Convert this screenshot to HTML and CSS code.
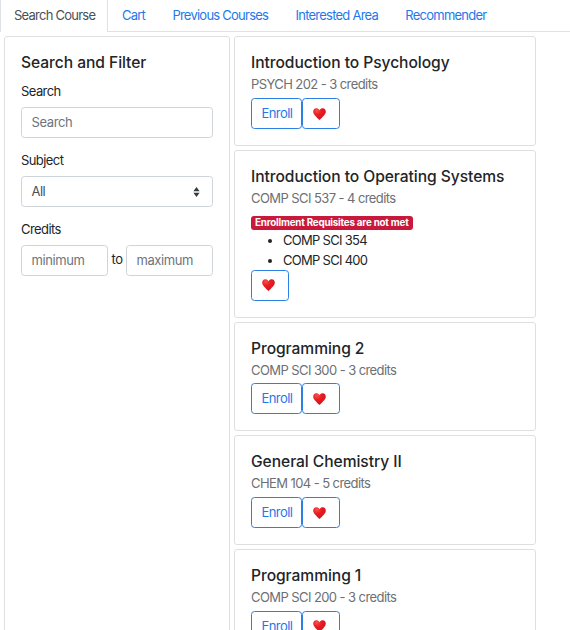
FILE: index.html
```
<!DOCTYPE html>
<html lang="en">
<head>
<meta charset="utf-8">
<title>Search Course</title>
<link rel="stylesheet" href="styles.css">
</head>
<body>
<svg class="defs" width="0" height="0" aria-hidden="true">
  <defs>
    <radialGradient id="red" cx=".3" cy=".2" r=".9"><stop offset="0" stop-color="#f8504a"/><stop offset=".4" stop-color="#e91c22"/><stop offset="1" stop-color="#d4101a"/></radialGradient>
    <symbol id="heart" viewBox="0 0 13 12"><path fill="url(#red)" d="M6.500 2.200C7.300.7 8.500.2 9.800.2 11.600.2 12.800 1.600 12.800 3.500 12.800 6.600 9.400 9.200 6.500 11.900 3.600 9.200.2 6.600.2 3.500.2 1.600 1.400.2 3.200.2 4.500.2 5.700.7 6.500 2.200Z"/></symbol>
  </defs>
</svg>
<nav class="tabs">
  <a class="tab active">Search Course</a>
  <a class="tab">Cart</a>
  <a class="tab">Previous Courses</a>
  <a class="tab">Interested Area</a>
  <a class="tab">Recommender</a>
</nav>
<main class="page">
  <aside class="card filter">
    <h2 class="title">Search and Filter</h2>
    <label class="label">Search</label>
    <div class="field placeholder">Search</div>
    <label class="label">Subject</label>
    <div class="field select"><span>All</span>
      <svg width="7" height="10" viewBox="0 0 7 10"><path fill="#343a40" d="M3.500 0 6.600 4.300H.4ZM3.500 10 .4 5.700H6.600Z"/></svg>
    </div>
    <label class="label">Credits</label>
    <div class="range"><div class="field placeholder small">minimum</div><span>to</span><div class="field placeholder small">maximum</div></div>
  </aside>
  <section class="courses">
    <article class="card">
      <h2 class="title">Introduction to Psychology</h2>
      <p class="sub">PSYCH 202 - 3 credits</p>
      <div class="actions"><a class="btn enroll">Enroll</a><a class="btn"><svg class="heart"><use href="#heart"/></svg></a></div>
    </article>
    <article class="card">
      <h2 class="title">Introduction to Operating Systems</h2>
      <p class="sub">COMP SCI 537 - 4 credits</p>
      <div class="badge">Enrollment Requisites are not met</div>
      <ul class="reqs"><li>COMP SCI 354</li><li>COMP SCI 400</li></ul>
      <div class="actions"><a class="btn"><svg class="heart"><use href="#heart"/></svg></a></div>
    </article>
    <article class="card">
      <h2 class="title">Programming 2</h2>
      <p class="sub">COMP SCI 300 - 3 credits</p>
      <div class="actions"><a class="btn enroll">Enroll</a><a class="btn"><svg class="heart"><use href="#heart"/></svg></a></div>
    </article>
    <article class="card">
      <h2 class="title">General Chemistry II</h2>
      <p class="sub">CHEM 104 - 5 credits</p>
      <div class="actions"><a class="btn enroll">Enroll</a><a class="btn"><svg class="heart"><use href="#heart"/></svg></a></div>
    </article>
    <article class="card">
      <h2 class="title">Programming 1</h2>
      <p class="sub">COMP SCI 200 - 3 credits</p>
      <div class="actions"><a class="btn enroll">Enroll</a><a class="btn"><svg class="heart"><use href="#heart"/></svg></a></div>
    </article>
  </section>
</main>
</body>
</html>
```
FILE: styles.css
```
* { box-sizing: border-box; }
html { height: 100%; overflow: hidden; }
body {
  display: flex;
  flex-direction: column;
  height: 630px;
  margin: 0;
  overflow: hidden;
  background: #fff;
  color: #212529;
  font: 13px/19.4px Inter, "Liberation Sans", sans-serif;
  letter-spacing: -0.58px;
}
.defs { position: absolute; }
.tabs {
  display: flex;
  flex: none;
  height: 32px;
  border-bottom: 1px solid #dee2e6;
}
.tab {
  height: 32px;
  padding: 6px 13.3px 0 14px;
  color: #1f78ea;
  letter-spacing: -0.76px;
  white-space: nowrap;
}
.tab.active {
  width: 108px;
  padding-left: 13px;
  border: solid #dee2e6;
  border-width: 0 1px;
  background: #fff;
  color: #495057;
}
.page {
  display: flex;
  flex: 1;
  gap: 4px;
  min-height: 0;
  padding: 4.3px 0 0 4px;
  overflow: hidden;
}
.card {
  flex: none;
  padding: 16px 16px 16px;
  border: 1px solid #dfdfdf;
  border-radius: 3px;
}
.filter { width: 226px; height: 640px; }
.courses {
  display: flex;
  flex-direction: column;
  gap: 4px;
  width: 302px;
}
.title {
  margin: 0 0 2.5px;
  font-size: 15.6px;
  font-weight: 500;
  line-height: 19.5px;
  letter-spacing: -0.05px;
  white-space: nowrap;
}
.sub {
  margin: 0 0 3.3px;
  color: #6c6f73;
}
.actions { display: flex; }
.btn {
  display: flex;
  align-items: center;
  width: 38px;
  height: 31px;
  padding-left: 9.5px;
  border: 1px solid #2b80e4;
  border-radius: 3.5px;
  color: #1f78ea;
}
.btn.enroll { width: 51px; }
.heart { width: 13px; height: 12px; }
.badge {
  width: 162px;
  height: 14px;
  margin-top: 8px;
  padding-left: 4px;
  border-radius: 3px;
  background: #c8193c;
  color: #fff;
  font-size: 9.8px;
  font-weight: 700;
  line-height: 14px;
  letter-spacing: -0.2px;
  white-space: nowrap;
}
.reqs { margin: 1px 0 -0.5px; padding-left: 32px; letter-spacing: -0.72px; }
.filter .title { margin-bottom: 9.5px; }
.label { display: block; margin-bottom: 5.7px; }
.field {
  height: 31px;
  margin-bottom: 12.9px;
  padding: 5px 9.5px;
  border: 1px solid #ced4da;
  border-radius: 3.5px;
  color: #495057;
}
.placeholder { color: #6c757d; letter-spacing: -0.4px; }
.select {
  display: flex;
  align-items: center;
  justify-content: space-between;
  padding-right: 12px;
}
.range { display: flex; justify-content: space-between; line-height: 29px; }
.small { width: 87px; line-height: 19.4px; }
```
